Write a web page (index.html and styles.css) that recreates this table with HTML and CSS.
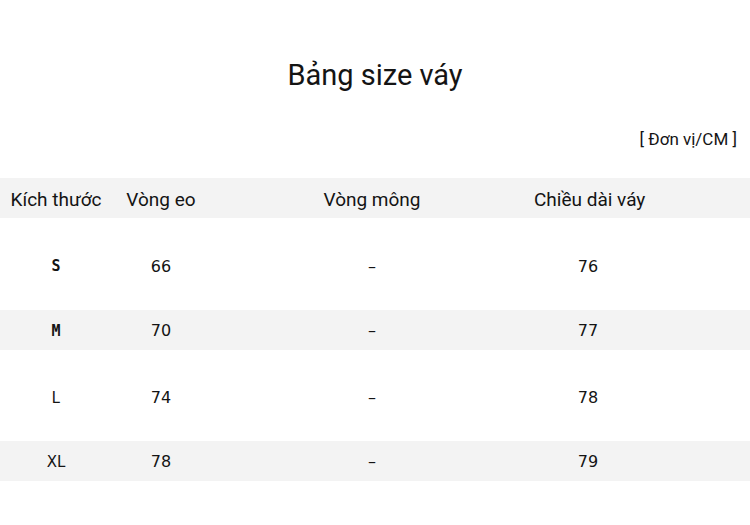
FILE: index.html
```html
<!DOCTYPE html>
<html lang="vi">
<head>
<meta charset="utf-8">
<title>Bảng size váy</title>
<link rel="stylesheet" href="styles.css">
</head>
<body>
<div class="page">
  <h1 class="title">Bảng size váy</h1>
  <div class="unit">[ Đơn vị/CM ]</div>
  <div class="table">
    <div class="row head">
      <div class="cell">Kích thước</div>
      <div class="cell">Vòng eo</div>
      <div class="cell">Vòng mông</div>
      <div class="cell">Chiều dài váy</div>
    </div>
    <div class="row tall first">
      <div class="cell size heavy">S</div>
      <div class="cell num">66</div>
      <div class="cell num">–</div>
      <div class="cell num">76</div>
    </div>
    <div class="row band">
      <div class="cell size heavy">M</div>
      <div class="cell num">70</div>
      <div class="cell num">–</div>
      <div class="cell num">77</div>
    </div>
    <div class="row tall">
      <div class="cell size">L</div>
      <div class="cell num">74</div>
      <div class="cell num">–</div>
      <div class="cell num">78</div>
    </div>
    <div class="row band">
      <div class="cell size sans">XL</div>
      <div class="cell num">78</div>
      <div class="cell num">–</div>
      <div class="cell num">79</div>
    </div>
  </div>
</div>
</body>
</html>
```
FILE: styles.css
```css
html, body {
  margin: 0;
  padding: 0;
  background: #ffffff;
}
body {
  font-family: Roboto, "Noto Sans", "Liberation Sans", sans-serif;
  color: #141414;
  width: 750px;
  height: 525px;
  overflow: hidden;
}
.page {
  display: flex;
  flex-direction: column;
}
.title {
  margin: 0;
  padding-top: 58px;
  font-size: 29px;
  line-height: 35px;
  font-weight: 400;
  text-align: center;
}
.unit {
  margin-top: 36px;
  align-self: flex-end;
  padding-right: 13px;
  font-size: 17px;
  line-height: 20px;
}
.table {
  margin-top: 29px;
  display: flex;
  flex-direction: column;
}
.row {
  display: grid;
  grid-template-columns: 112px 98px 324px 108px 1fr;
  align-items: center;
  height: 40px;
  padding-top: 1px;
  box-sizing: border-box;
}
.row.head {
  padding-top: 3px;
}
.row.head,
.row.band {
  background: #f3f3f3;
}
.row.tall {
  height: 91px;
  padding-top: 4px;
}
.row.first {
  height: 92px;
}
.cell {
  text-align: center;
  white-space: nowrap;
}
.head .cell {
  font-size: 19px;
  line-height: 22px;
}
.size {
  font-family: "DejaVu Sans Mono", "Liberation Mono", monospace;
  font-size: 15px;
}
.size.heavy {
  font-weight: 700;
}
.size.sans {
  font-family: "DejaVu Sans", sans-serif;
}
.num {
  font-family: "DejaVu Sans", "Noto Sans", sans-serif;
  font-size: 16px;
}
```
